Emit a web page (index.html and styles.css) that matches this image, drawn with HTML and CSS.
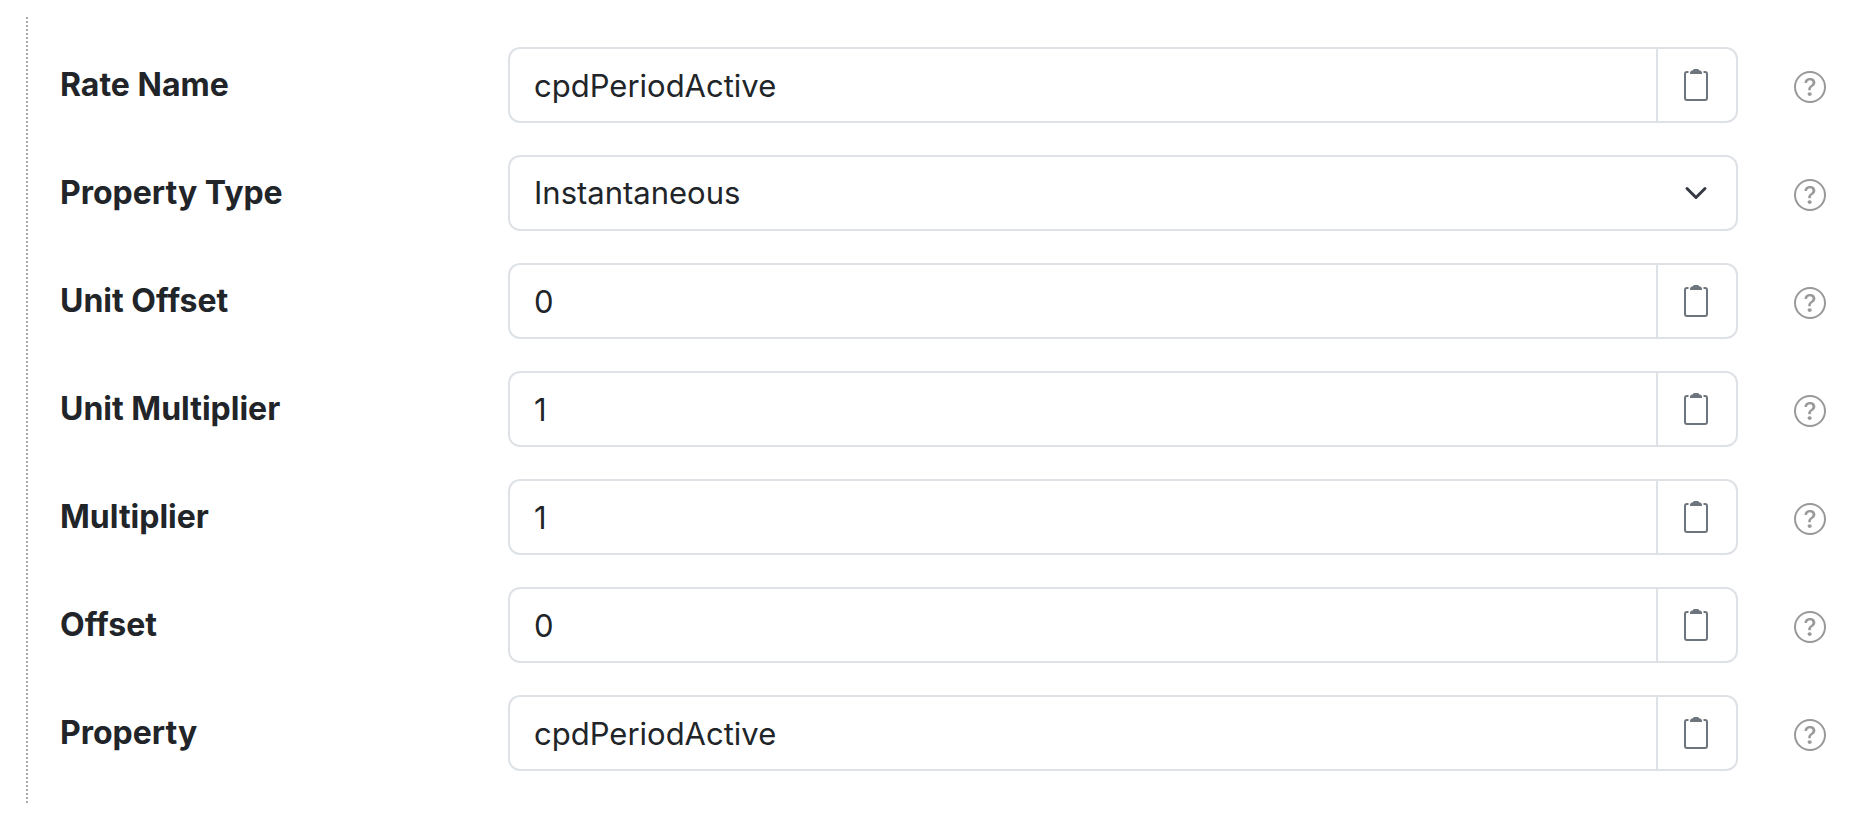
FILE: index.html
```html
<!DOCTYPE html>
<html lang="en">
<head>
<meta charset="utf-8">
<meta name="viewport" content="width=device-width, initial-scale=1">
<title>Rate settings</title>
<link rel="stylesheet" href="styles.css">
</head>
<body>
<svg class="sprite" aria-hidden="true">
  <symbol id="clipboard" viewBox="0 0 32 32">
    <path d="M8.500 3H7Q5 3 5 5V29Q5 31 7 31H25Q27 31 27 29V5Q27 3 25 3H23.500" fill="none" stroke="currentColor" stroke-width="2"/>
    <path d="M10 5V4Q10 1.500 12.500 1.500Q13 0 14.500 0H17.500Q19 0 19.500 1.500Q22 1.500 22 4V5Z" fill="currentColor"/>
  </symbol>
  <symbol id="help" viewBox="0 0 16 16">
    <circle cx="8" cy="8" r="7.500" fill="none" stroke="currentColor"/>
    <path fill="currentColor" d="M5.255 5.786a.237.237 0 0 0 .241.247h.825c.138 0 .248-.113.266-.25.09-.656.54-1.134 1.342-1.134.686 0 1.314.343 1.314 1.168 0 .635-.374.927-.965 1.371-.673.489-1.206 1.06-1.168 1.987l.003.217a.25.25 0 0 0 .25.246h.811a.25.25 0 0 0 .25-.25v-.105c0-.718.273-.927 1.01-1.486.609-.463 1.244-.977 1.244-2.056 0-1.511-1.276-2.241-2.673-2.241-1.267 0-2.655.59-2.75 2.286m1.557 5.763c0 .533.425.927 1.01.927.609 0 1.028-.394 1.028-.927 0-.552-.42-.94-1.029-.94-.584 0-1.009.388-1.009.94"/>
  </symbol>
</svg>
<form class="settings">
  <div class="row">
    <label class="label" for="rate-name">Rate Name</label>
    <div class="field"><input class="input" id="rate-name" type="text" value="cpdPeriodActive"><button class="copy" type="button" aria-label="Copy rate name"><svg class="icon"><use href="#clipboard"/></svg></button></div>
    <button class="help" type="button" aria-label="Help: Rate Name"><svg class="icon"><use href="#help"/></svg></button>
  </div>
  <div class="row">
    <label class="label" for="property-type">Property Type</label>
    <div class="field field-select"><select class="input select" id="property-type"><option>Instantaneous</option></select><svg class="chevron" viewBox="0 0 16 16" aria-hidden="true"><path d="m2 5 6 6 6-6" fill="none" stroke="currentColor" stroke-width="2" stroke-linecap="round" stroke-linejoin="round"/></svg></div>
    <button class="help" type="button" aria-label="Help: Property Type"><svg class="icon"><use href="#help"/></svg></button>
  </div>
  <div class="row">
    <label class="label" for="unit-offset">Unit Offset</label>
    <div class="field"><input class="input" id="unit-offset" type="text" value="0"><button class="copy" type="button" aria-label="Copy unit offset"><svg class="icon"><use href="#clipboard"/></svg></button></div>
    <button class="help" type="button" aria-label="Help: Unit Offset"><svg class="icon"><use href="#help"/></svg></button>
  </div>
  <div class="row">
    <label class="label" for="unit-multiplier">Unit Multiplier</label>
    <div class="field"><input class="input" id="unit-multiplier" type="text" value="1"><button class="copy" type="button" aria-label="Copy unit multiplier"><svg class="icon"><use href="#clipboard"/></svg></button></div>
    <button class="help" type="button" aria-label="Help: Unit Multiplier"><svg class="icon"><use href="#help"/></svg></button>
  </div>
  <div class="row">
    <label class="label" for="multiplier">Multiplier</label>
    <div class="field"><input class="input" id="multiplier" type="text" value="1"><button class="copy" type="button" aria-label="Copy multiplier"><svg class="icon"><use href="#clipboard"/></svg></button></div>
    <button class="help" type="button" aria-label="Help: Multiplier"><svg class="icon"><use href="#help"/></svg></button>
  </div>
  <div class="row">
    <label class="label" for="offset">Offset</label>
    <div class="field"><input class="input" id="offset" type="text" value="0"><button class="copy" type="button" aria-label="Copy offset"><svg class="icon"><use href="#clipboard"/></svg></button></div>
    <button class="help" type="button" aria-label="Help: Offset"><svg class="icon"><use href="#help"/></svg></button>
  </div>
  <div class="row">
    <label class="label" for="property">Property</label>
    <div class="field"><input class="input" id="property" type="text" value="cpdPeriodActive"><button class="copy" type="button" aria-label="Copy property"><svg class="icon"><use href="#clipboard"/></svg></button></div>
    <button class="help" type="button" aria-label="Help: Property"><svg class="icon"><use href="#help"/></svg></button>
  </div>
</form>
</body>
</html>
```
FILE: styles.css
```css
* {
  box-sizing: border-box;
}

body {
  margin: 0;
  padding: 17px 38px 0 26px;
  background: #fff;
  color: #212529;
  font-family: Inter, "Liberation Sans", sans-serif;
  font-size: 31px;
  line-height: 48px;
}

.sprite {
  display: none;
}

.settings {
  display: flex;
  flex-direction: column;
  gap: 32px;
  padding: 30px 0 32px 32px;
  border-left: 2px dotted #aaa;
}

.row {
  display: grid;
  grid-template-columns: 448px minmax(0, 1fr) 88px;
  align-items: center;
}

.label {
  font-size: 32px;
  font-weight: 700;
}

.field {
  display: flex;
  border: 2px solid #dee2e6;
  border-radius: 12px;
  overflow: hidden;
}

.field-select {
  display: grid;
  align-items: center;
}

.input {
  flex: 1;
  min-width: 0;
  width: 100%;
  height: 72px;
  margin: 0;
  padding: 12px 24px;
  border: 0;
  outline: 0;
  background: transparent;
  color: inherit;
  font: inherit;
}

.select {
  grid-area: 1 / 1;
  appearance: none;
}

.chevron {
  grid-area: 1 / 1;
  justify-self: end;
  width: 24px;
  height: 24px;
  margin-right: 28px;
  color: #343a40;
  pointer-events: none;
}

.copy {
  display: flex;
  align-items: center;
  justify-content: center;
  width: 80px;
  padding: 0 2px 0 0;
  border: 0;
  border-left: 2px solid #dee2e6;
  background: transparent;
  color: #6c757d;
}

.help {
  justify-self: end;
  padding: 4px 0 0;
  border: 0;
  background: transparent;
  color: #999;
}

.icon {
  display: block;
  width: 32px;
  height: 32px;
}
```
